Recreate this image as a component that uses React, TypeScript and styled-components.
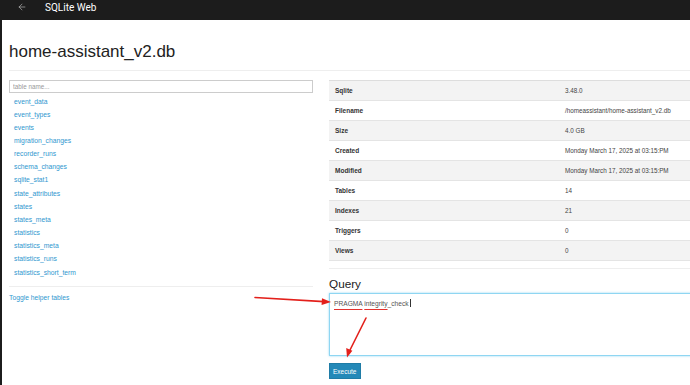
import styled, { createGlobalStyle } from 'styled-components';
import { ArrowLeft } from 'lucide-react';

const tables = [
  'event_data',
  'event_types',
  'events',
  'migration_changes',
  'recorder_runs',
  'schema_changes',
  'sqlite_stat1',
  'state_attributes',
  'states',
  'states_meta',
  'statistics',
  'statistics_meta',
  'statistics_runs',
  'statistics_short_term',
];

const info: [string, string][] = [
  ['Sqlite', '3.48.0'],
  ['Filename', '/homeassistant/home-assistant_v2.db'],
  ['Size', '4.0 GB'],
  ['Created', 'Monday March 17, 2025 at 03:15:PM'],
  ['Modified', 'Monday March 17, 2025 at 03:15:PM'],
  ['Tables', '14'],
  ['Indexes', '21'],
  ['Triggers', '0'],
  ['Views', '0'],
];

const GlobalStyle = createGlobalStyle`
  html, body {
    margin: 0;
    padding: 0;
    background: #fff;
    overflow: hidden;
  }
  body {
    width: 690px;
    height: 385px;
    font-family: "Liberation Sans", Arial, sans-serif;
  }
`;

const Frame = styled.div`
  position: relative;
  width: 690px;
  height: 385px;
  overflow: hidden;
  border-left: 2px solid #1c1c1c;
  box-sizing: border-box;
`;

const TopBar = styled.header`
  display: flex;
  align-items: center;
  height: 20px;
  padding: 0 0 6px 15px;
  box-sizing: border-box;
  background: #1c1c1c;
  color: #fff;
  font-family: Roboto, "Liberation Sans", sans-serif;
  font-size: 10px;

  svg {
    color: #b8b8b8;
    margin-right: 18px;
  }
`;

const Page = styled.main`
  padding-left: 7px;
`;

const Title = styled.h1`
  margin: 22px 0 0;
  font-size: 17px;
  line-height: 20px;
  font-weight: normal;
  color: #222;
`;

const Rule = styled.hr<{ gap?: number }>`
  border: 0;
  border-top: 1px solid #eee;
  margin: ${({ gap }) => gap ?? 8}px 0 0;
`;

const Columns = styled.div`
  display: grid;
  grid-template-columns: 304px 430px;
  column-gap: 16px;
  margin-top: 9px;
  align-items: start;
`;

const Sidebar = styled.aside`
  display: flex;
  flex-direction: column;
`;

const Search = styled.input`
  height: 13px;
  box-sizing: border-box;
  border: 1px solid #ccc;
  padding: 0 3px;
  font-family: inherit;
  font-size: 6.3px;
  color: #555;
  outline: none;

  &::placeholder {
    color: #999;
  }
`;

const TableList = styled.ul`
  list-style: none;
  margin: 1.5px 0 0;
  padding: 0 0 0 5px;
`;

const TableLink = styled.a`
  display: block;
  font-size: 6.75px;
  line-height: 13.15px;
  color: #2f97cf;
  text-decoration: none;
`;

const ToggleLink = styled(TableLink)`
  margin-top: 4.5px;
`;

const Content = styled.section`
  display: flex;
  flex-direction: column;
`;

const InfoTable = styled.table`
  width: 100%;
  border-collapse: collapse;
  border-top: 1px solid #ddd;
  font-size: 6.3px;
`;

const InfoRow = styled.tr<{ striped: boolean }>`
  background: ${({ striped }) => (striped ? '#f3f3f3' : '#fff')};
`;

const Label = styled.th`
  width: 218px;
  height: 19px;
  padding: 0 6px;
  text-align: left;
  font-size: 6.5px;
  font-weight: bold;
  color: #333;
  border-bottom: 1px solid #e4e4e4;
`;

const Value = styled.td`
  padding: 0 6px;
  color: #444;
  border-bottom: 1px solid #e4e4e4;
`;

const QueryTitle = styled.h3`
  margin: 8px 0 0;
  font-size: 11.75px;
  line-height: 14px;
  font-weight: normal;
  color: #222;
`;

const QueryBox = styled.div`
  height: 63px;
  margin-top: 2px;
  box-sizing: border-box;
  border: 1px solid #8fd6f2;
  box-shadow: 0 0 2px rgba(102, 200, 240, 0.7);
  padding: 5px 4px;
  font-size: 6.65px;
  line-height: 8px;
  color: #555;
  white-space: pre;
`;

const Misspelled = styled.span`
  text-decoration-line: underline;
  text-decoration-style: solid;
  text-decoration-color: #e3312d;
  text-decoration-thickness: 1px;
  text-underline-offset: 2.5px;
`;

const Caret = styled.span`
  display: inline-block;
  width: 0.6px;
  height: 8px;
  margin-left: 1px;
  vertical-align: -1.5px;
  background: #333;
`;

const Execute = styled.button`
  align-self: flex-start;
  height: 16px;
  margin-top: 7px;
  padding: 0 3px;
  border: 1px solid #1f7ca6;
  background: #2489b8;
  color: #fff;
  font-family: inherit;
  font-size: 6.5px;
`;

const Annotations = styled.svg`
  position: absolute;
  top: 0;
  left: -2px;
  pointer-events: none;
`;

export default function App() {
  return (
    <>
      <GlobalStyle />
      <Frame>
        <TopBar>
          <ArrowLeft size={10} strokeWidth={1.6} />
          SQLite Web
        </TopBar>
        <Page>
          <Title>home-assistant_v2.db</Title>
          <Rule />
          <Columns>
            <Sidebar>
              <Search placeholder="table name..." />
              <TableList>
                {tables.map((t) => (
                  <li key={t}>
                    <TableLink href="#">{t}</TableLink>
                  </li>
                ))}
              </TableList>
              <Rule gap={7} />
              <ToggleLink href="#">Toggle helper tables</ToggleLink>
            </Sidebar>
            <Content>
              <InfoTable>
                <tbody>
                  {info.map(([k, v], i) => (
                    <InfoRow key={k} striped={i % 2 === 0}>
                      <Label>{k}</Label>
                      <Value>{v}</Value>
                    </InfoRow>
                  ))}
                </tbody>
              </InfoTable>
              <Rule gap={7} />
              <QueryTitle>Query</QueryTitle>
              <QueryBox role="textbox">
                <Misspelled>PRAGMA</Misspelled> <Misspelled>integrity</Misspelled>_check
                <Caret />
              </QueryBox>
              <Execute>Execute</Execute>
            </Content>
          </Columns>
        </Page>
        <Annotations width="690" height="385" viewBox="0 0 690 385">
          <g stroke="#e3201b" strokeWidth="1.6" fill="#e3201b" strokeLinecap="round">
            <line x1="255" y1="297.5" x2="324" y2="301.6" />
            <polygon points="331,302 322,298.3 321.6,305" stroke="none" />
            <line x1="366" y1="318" x2="349.5" y2="351" />
            <polygon points="347,357.5 346.2,348 352.4,350.8" stroke="none" />
          </g>
        </Annotations>
      </Frame>
    </>
  );
}
